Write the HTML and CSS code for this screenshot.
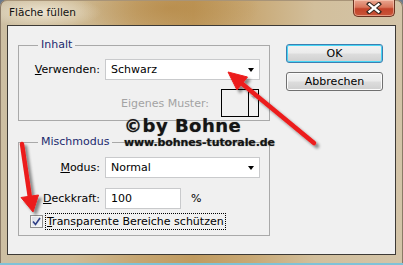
FILE: index.html
```html
<!DOCTYPE html>
<html lang="de">
<head>
<meta charset="utf-8">
<title>Fläche füllen</title>
<link rel="stylesheet" href="styles.css">
</head>
<body>
<div class="window">
  <div class="titlebar">
    <span class="title">Fläche füllen</span>
    <div class="close">
      <svg width="16" height="12" viewBox="0 0 16 12">
        <path d="M3 2 L13 10 M13 2 L3 10" stroke="#3a2a22" stroke-width="4.2" stroke-linecap="square"/>
        <path d="M3.5 2.4 L12.5 9.6 M12.5 2.4 L3.5 9.6" stroke="#fff" stroke-width="2.4" stroke-linecap="square"/>
      </svg>
    </div>
  </div>
  <div class="client">
    <div class="main">
      <fieldset class="group g-inhalt">
        <legend>Inhalt</legend>
        <div class="row r-use">
          <span class="lbl"><u>V</u>erwenden:</span>
          <div class="select">Schwarz<span class="caret"></span></div>
        </div>
        <div class="row r-muster">
          <span class="lbl-dim">Eigenes Muster:</span>
          <div class="swatch">
            <div class="swatch-box"></div>
            <div class="swatch-drop"><span class="caret dim"></span></div>
          </div>
        </div>
      </fieldset>
      <fieldset class="group g-misch">
        <legend>Mischmodus</legend>
        <div class="row r-mode">
          <span class="lbl"><u>M</u>odus:</span>
          <div class="select">Normal<span class="caret"></span></div>
        </div>
        <div class="row r-opac">
          <span class="lbl"><u>D</u>eckkraft:</span>
          <div class="input">100</div>
          <span class="pct">%</span>
        </div>
        <div class="row r-check">
          <span class="checkbox">
            <svg width="9" height="9" viewBox="0 0 9 9"><path d="M1 4.5 L3.5 7.5 L8 1" fill="none" stroke="#2f3f86" stroke-width="1.6"/></svg>
          </span>
          <span class="check-lbl"><u>T</u>ransparente Bereiche schützen</span>
        </div>
      </fieldset>
    </div>
    <div class="buttons">
      <div class="btn btn-default">OK</div>
      <div class="btn">Abbrechen</div>
    </div>
    <div class="watermark">
      <div class="wm1">©by Bohne</div>
      <div class="wm2">www.bohnes-tutorale.de</div>
    </div>
  </div>
  <svg class="arrows" width="403" height="265" viewBox="0 0 403 265">
    <defs>
      <filter id="sh" x="-20%" y="-20%" width="140%" height="140%">
        <feGaussianBlur in="SourceAlpha" stdDeviation="1.6"/>
        <feOffset dx="3" dy="3" result="b"/>
        <feComponentTransfer><feFuncA type="linear" slope="0.45"/></feComponentTransfer>
        <feMerge><feMergeNode/><feMergeNode in="SourceGraphic"/></feMerge>
      </filter>
    </defs>
    <g filter="url(#sh)" fill="#ec1c1c" stroke="#ec1c1c">
      <line x1="314" y1="143" x2="240" y2="82" stroke-width="4.5" stroke-linecap="round"/>
      <polygon points="228,72 247.5,77 237,90" stroke-width="1" stroke-linejoin="round"/>
      <line x1="22" y1="144" x2="30" y2="198" stroke-width="4.5" stroke-linecap="round"/>
      <polygon points="33,212 38.5,195 21,197.5" stroke-width="1" stroke-linejoin="round"/>
    </g>
  </svg>
</div>
</body>
</html>
```
FILE: styles.css
```css
html, body {
  margin: 0;
  padding: 0;
}
body {
  width: 403px;
  height: 265px;
  overflow: hidden;
  font-family: "DejaVu Sans", "Liberation Sans", sans-serif;
  font-size: 11px;
  color: #000;
  background: #6b7a8c;
}
.window {
  position: relative;
  width: 403px;
  height: 265px;
  box-sizing: border-box;
  display: flex;
  flex-direction: column;
  padding: 0 7px 8px 7px;
  border-radius: 7px 7px 0 0;
  border-bottom: 2px solid #7fc2d8;
  background:
    radial-gradient(ellipse 60px 16px at 42px 12px, rgba(240,232,214,0.9), rgba(240,232,214,0) 100%),
    radial-gradient(ellipse 90px 30px at 170px 8px, rgba(178,130,60,0.55), rgba(178,130,60,0) 100%),
    linear-gradient(90deg, #cdbfa3 0%, #cfbc97 18%, #c6a672 34%, #c09b60 48%, #c8a874 62%, #d2bf9c 78%, #d3c4a8 100%);
  box-shadow: inset 1px 0 0 #8b7a66, inset -1px 0 0 #8b7a66, inset 0 1px 0 #a89478;
}
.titlebar {
  height: 25px;
  flex: none;
  display: flex;
  align-items: flex-start;
  justify-content: space-between;
}
.title {
  font-size: 10.5px;
  margin-top: 6px;
  margin-left: 2px;
  color: #111;
}
.close {
  width: 42px;
  height: 17px;
  margin-right: 1px;
  box-sizing: border-box;
  border: 1px solid #6a3322;
  border-top: none;
  border-radius: 0 0 5px 5px;
  background: linear-gradient(#e9a690 0%, #d9775c 45%, #c3432a 55%, #c9553a 100%);
  box-shadow: inset 0 0 0 1px rgba(255,220,200,0.5);
  display: flex;
  align-items: center;
  justify-content: center;
}
.client {
  position: relative;
  flex: 1;
  display: flex;
  align-items: flex-start;
  border: 1px solid #3d3a36;
  background: #f0f0f0;
}
.main {
  padding-left: 10px;
}
.group {
  width: 252px;
  box-sizing: border-box;
  margin: 0;
  padding: 0 9px 0 0;
  border: 1px solid #a9a9a9;
}
.group legend {
  margin-left: 19px;
  padding: 0 3px;
  line-height: 14px;
  color: #1b2a6e;
}
.g-inhalt {
  margin-top: 12px;
  padding-bottom: 3px;
}
.g-misch {
  margin-top: 14px;
  padding-bottom: 5px;
}
.row {
  display: flex;
  align-items: center;
}
.lbl {
  width: 81px;
  text-align: right;
  margin-right: 5px;
  flex: none;
}
.lbl-dim {
  color: #a3a3a3;
  margin-right: 12px;
}
.r-use {
  margin-top: 7px;
}
.r-muster {
  margin-top: 9px;
  justify-content: flex-end;
  padding-right: 1px;
}
.select, .input {
  height: 21px;
  box-sizing: border-box;
  border: 1px solid #c9cacc;
  background: #fff;
  display: flex;
  align-items: center;
  padding-left: 5px;
}
.select {
  width: 155px;
  justify-content: space-between;
  padding-right: 5px;
}
.input {
  width: 76px;
}
.pct {
  margin-left: 10px;
}
.caret {
  width: 0;
  height: 0;
  border-left: 3.5px solid transparent;
  border-right: 3.5px solid transparent;
  border-top: 4px solid #000;
}
.caret.dim {
  border-left-width: 3px;
  border-right-width: 3px;
  border-top: 3px solid #c8c8c8;
}
.swatch {
  display: flex;
  height: 28px;
}
.swatch-box {
  width: 28px;
  height: 28px;
  box-sizing: border-box;
  border: 1px solid #000;
  background: #f0f0f0;
}
.swatch-drop {
  width: 10px;
  height: 28px;
  box-sizing: border-box;
  border: 1px solid #000;
  border-left: none;
  display: flex;
  justify-content: center;
  padding-top: 6px;
}
.r-mode {
  margin-top: 8px;
}
.r-opac {
  margin-top: 10px;
}
.r-check {
  margin-top: 4px;
  margin-left: 11px;
  height: 17px;
}
.checkbox {
  width: 13px;
  height: 13px;
  box-sizing: border-box;
  border: 1px solid #8e8f8f;
  background: linear-gradient(135deg, #d6dbe4, #f7f8fa);
  box-shadow: inset 0 0 0 1px #f4f4f4;
  display: flex;
  align-items: center;
  justify-content: center;
  margin-right: 3px;
}
.check-lbl {
  outline: 1px dotted #000;
  outline-offset: 0;
  padding: 1px 1px 1px 1px;
}
.buttons {
  margin-left: 16px;
  margin-top: 18px;
  display: flex;
  flex-direction: column;
  gap: 9px;
}
.btn {
  width: 97px;
  height: 19px;
  box-sizing: border-box;
  border: 1px solid #707070;
  border-radius: 3px;
  background: linear-gradient(#f2f2f2 0%, #ebebeb 48%, #dddddd 52%, #cfcfcf 100%);
  box-shadow: inset 0 0 0 1px #fbfbfb;
  display: flex;
  align-items: center;
  justify-content: center;
}
.btn-default {
  border-color: #3c7fb1;
  box-shadow: inset 0 0 0 1px #48d6f5;
}
.watermark {
  position: absolute;
  left: 116px;
  top: 89px;
  font-family: "DejaVu Sans", sans-serif;
  font-weight: bold;
  color: #151515;
  text-shadow: 0 0 1px #777;
}
.wm1 {
  font-size: 18px;
  line-height: 22px;
  letter-spacing: 0.5px;
}
.wm2 {
  font-size: 11px;
  line-height: 12px;
  letter-spacing: -0.1px;
}
.arrows {
  position: absolute;
  left: 0;
  top: 0;
  pointer-events: none;
}
```
